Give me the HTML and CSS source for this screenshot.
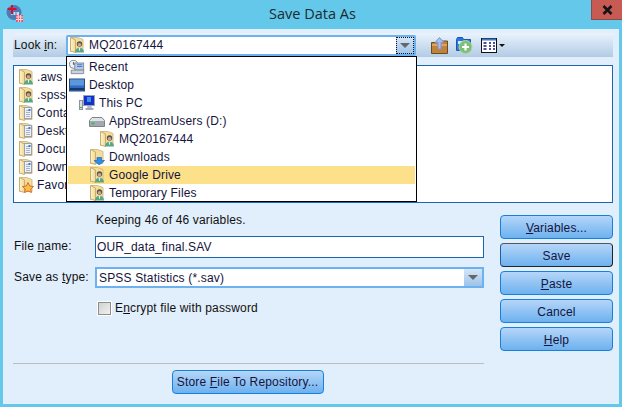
FILE: index.html
```html
<!DOCTYPE html>
<html lang="en">
<head>
<meta charset="utf-8">
<title>Save Data As</title>
<link rel="stylesheet" href="styles.css">
</head>
<body>
<svg class="defs" width="0" height="0" aria-hidden="true">
  <defs>
    <linearGradient id="fold" x1="0" y1="0" x2="1" y2="0"><stop offset="0" stop-color="#fdf3cf"/><stop offset="1" stop-color="#f0d892"/></linearGradient>
    <symbol id="folder" viewBox="0 0 16 16">
      <path d="M1.500 .5h7l5.500 2v12h-12.500z" fill="#f3dc9c" stroke="#d3bd84" stroke-width="1"/>
      <path d="M1.500 .5l5 2.500v12.500l-5-1.500z" fill="url(#fold)" stroke="#c9ae6e" stroke-width="1"/>
    </symbol>
    <symbol id="f-user" viewBox="0 0 16 16">
      <use href="#folder"/>
      <circle cx="10.500" cy="7" r="2.700" fill="#5d5245"/>
      <circle cx="10.500" cy="7.700" r="1.800" fill="#c9a78c"/>
      <path d="M6 15.500c0-3 2-4.700 4.500-4.700s4.500 1.700 4.500 4.700z" fill="#5aa583"/>
      <path d="M9.700 10.800h1.600l-.4 3h-.8z" fill="#e4f2ea"/>
    </symbol>
    <symbol id="f-doc" viewBox="0 0 16 16">
      <use href="#folder"/>
      <rect x="6.500" y="2.500" width="7" height="11" fill="#eef1f6" stroke="#98a2b0"/>
      <path d="M8 5.500h4M8 7.500h4M8 9.500h4M8 11.500h4" stroke="#a9b3c2"/>
      <rect x="10.500" y="4" width="2" height="2" fill="#3a78d0"/>
    </symbol>
    <symbol id="f-star" viewBox="0 0 16 16">
      <use href="#folder"/>
      <path d="M10 5.500l1.700 3.500 3.800.5-2.800 2.600.7 3.400-3.400-1.600-3.400 1.600.7-3.400-2.800-2.600 3.800-.5z" fill="#f6c24a" stroke="#dc6a2c" stroke-width="1"/>
    </symbol>
    <symbol id="f-down" viewBox="0 0 16 16">
      <use href="#folder"/>
      <path d="M8 8.500h4.500v3H15.500l-5.250 4.500-5.250-4.500H8z" fill="#2b8fe6" stroke="#1b69c0" stroke-width=".7"/>
    </symbol>
  </defs>
</svg>
<div class="window">
  <header class="titlebar">
    <svg class="app-icon" width="18" height="18" viewBox="0 0 18 18" aria-hidden="true">
      <circle cx="9" cy="8.500" r="7.500" fill="#4f7bb5"/>
      <path d="M6 8h8v3H6z" fill="#c9d8ec"/>
      <path d="M8 8v3M11 8v3" stroke="#4f7bb5"/>
      <rect x="11" y="11" width="7" height="7" fill="#e8506a"/>
      <path d="M11 13h7M11 15.500h7M13.300 11v7M15.700 11v7" stroke="#fbd5dc"/>
      <path d="M7 1v9M2.500 5h9" stroke="#d8102e" stroke-width="2"/>
    </svg>
    <span class="title">Save Data As</span>
    <button class="close" type="button">
      <svg width="11" height="10" viewBox="0 0 11 10" aria-hidden="true"><path d="M1.500 1l8 8M9.500 1l-8 8" stroke="#141414" stroke-width="2.600"/></svg>
    </button>
  </header>
  <main class="client">
    <div class="toolbar">
      <span class="look-label">Look <u>i</u>n:</span>
      <div class="combo look-combo">
        <svg class="ic16" aria-hidden="true"><use href="#f-user"/></svg>
        <span class="combo-value">MQ20167444</span>
        <span class="combo-btn focused"><i class="caret"></i></span>
      </div>
      <div class="tools">
        <svg width="17" height="17" viewBox="0 0 17 17" aria-hidden="true">
          <path d="M.5 5.500h5l1-1.500h10v12.500h-16z" fill="#c08238" stroke="#6e4a24"/>
          <path d="M1 7h15v2H1z" fill="#dca45c"/>
          <path d="M8.500 .5l4.500 5h-3v6.500h-3V5.500H4z" fill="#a9bdf0" stroke="#7d94d6"/>
        </svg>
        <svg width="17" height="17" viewBox="0 0 17 17" aria-hidden="true">
          <path d="M.5 2.500l1-2h5l1 2h7v11h-14z" fill="#2a77e0" stroke="#1a58b8"/>
          <path d="M2 4h11v3H2z" fill="#dce9fb"/>
          <circle cx="9.500" cy="10" r="6.500" fill="#7fbe78" stroke="#a8d8a2"/>
          <path d="M9.500 6.500v7M6 10h7" stroke="#fff" stroke-width="2.200"/>
        </svg>
        <span class="view-tool">
          <svg width="16" height="15" viewBox="0 0 16 15" aria-hidden="true">
            <rect x=".5" y=".5" width="15" height="14" fill="#fff" stroke="#111"/>
            <path d="M1 1.500h14" stroke="#3a78c8" stroke-width="2"/>
            <path d="M2.500 5h3M8 5h2M12 5h2M2.500 8h3M8 8h2M12 8h2M2.500 11h3M8 11h2M12 11h2" stroke="#16167e" stroke-width="1.500"/>
          </svg>
          <i class="mini-caret"></i>
        </span>
      </div>
    </div>

    <ul class="file-list">
      <li><svg class="ic16" aria-hidden="true"><use href="#f-user"/></svg>.aws</li>
      <li><svg class="ic16" aria-hidden="true"><use href="#f-user"/></svg>.spss</li>
      <li><svg class="ic16" aria-hidden="true"><use href="#f-doc"/></svg>Contacts</li>
      <li><svg class="ic16" aria-hidden="true"><use href="#f-doc"/></svg>Desktop</li>
      <li><svg class="ic16" aria-hidden="true"><use href="#f-doc"/></svg>Documents</li>
      <li><svg class="ic16" aria-hidden="true"><use href="#f-doc"/></svg>Downloads</li>
      <li><svg class="ic16" aria-hidden="true"><use href="#f-star"/></svg>Favorites</li>
    </ul>

    <div class="lower">
      <div class="form">
        <p class="note">Keeping 46 of 46 variables.</p>
        <div class="field">
          <label class="field-label">File <u>n</u>ame:</label>
          <div class="text-input">OUR_data_final.SAV</div>
        </div>
        <div class="field type-field">
          <label class="field-label">Save as <u>t</u>ype:</label>
          <div class="combo type-combo">
            <span class="combo-value">SPSS Statistics (*.sav)</span>
            <span class="combo-btn"><i class="caret"></i></span>
          </div>
        </div>
        <label class="check"><i class="box"></i><span>E<u>n</u>crypt file with password</span></label>
        <hr class="rule">
        <div class="store-row">
          <button class="btn store" type="button">Store <u>F</u>ile To Repository...</button>
        </div>
      </div>
      <div class="actions">
        <button class="btn" type="button"><u>V</u>ariables...</button>
        <button class="btn default" type="button">Save</button>
        <button class="btn" type="button"><u>P</u>aste</button>
        <button class="btn" type="button">Cancel</button>
        <button class="btn" type="button"><u>H</u>elp</button>
      </div>
    </div>
  </main>

  <ul class="popup">
    <li>
      <svg class="ic16" viewBox="0 0 18 16" aria-hidden="true">
        <circle cx="5" cy="5" r="4.500" fill="#eef1f5" stroke="#76808c"/>
        <path d="M5 2.500V5h2" stroke="#444" fill="none"/>
        <rect x="6.500" y="3.500" width="10" height="8" fill="#b9cbe6" stroke="#77889e"/>
        <path d="M2.500 11.500h14v4h-14z" fill="#cdd3db" stroke="#7d8794"/>
        <path d="M9 5.500h6M9 7.500h6" stroke="#3f70c0"/>
      </svg>Recent
    </li>
    <li>
      <svg class="ic16" viewBox="0 0 16 13" aria-hidden="true">
        <rect x=".5" y=".5" width="15" height="12" fill="#2c6cc4" stroke="#2a4a78"/>
        <path d="M1 1h14v6H1z" fill="#5c96dc"/>
        <path d="M1 10.500h14" stroke="#16386c" stroke-width="2"/>
      </svg>Desktop
    </li>
    <li class="lvl1">
      <svg class="ic16" viewBox="0 0 16 16" aria-hidden="true">
        <rect x=".5" y="5.500" width="3" height="9" fill="#d8dce2" stroke="#8a929c"/>
        <path d="M1 12.500h2" stroke="#4ea84e"/>
        <rect x="4.500" y=".5" width="11" height="10" fill="#1530c8" stroke="#9aa4b2"/>
        <path d="M8 2h4v5H8z" fill="#3f90ea"/>
        <path d="M8.500 11h4l.5 2.500H8z" fill="#b4bcc6"/>
        <path d="M6.500 14h8" stroke="#8a929c" stroke-width="1.500"/>
      </svg>This PC
    </li>
    <li class="lvl2">
      <svg class="ic16" viewBox="0 0 16 16" aria-hidden="true">
        <path d="M.5 7.500l2.500-3h10l2.500 3v6h-15z" fill="#dfe2e6" stroke="#7b838d"/>
        <path d="M1 8h14v5H1z" fill="#a3a9b1"/>
        <path d="M2.500 10.500h3" stroke="#48b848" stroke-width="2"/>
      </svg>AppStreamUsers (D:)
    </li>
    <li class="lvl3"><svg class="ic16" aria-hidden="true"><use href="#f-user"/></svg>MQ20167444</li>
    <li class="lvl2"><svg class="ic16" aria-hidden="true"><use href="#f-down"/></svg>Downloads</li>
    <li class="lvl2 selected"><svg class="ic16" aria-hidden="true"><use href="#f-user"/></svg>Google Drive</li>
    <li class="lvl2"><svg class="ic16" aria-hidden="true"><use href="#f-user"/></svg>Temporary Files</li>
  </ul>
</div>
</body>
</html>
```
FILE: styles.css
```css
* { box-sizing: border-box; }
html, body { margin: 0; padding: 0; }
body {
  width: 622px;
  height: 407px;
  overflow: hidden;
  font-family: "Liberation Sans", Arial, sans-serif;
  font-size: 12px;
  letter-spacing: .16px;
  color: #111;
  background: #63c8e9;
}
.defs { position: absolute; }
u { text-underline-offset: 1px; }

.window {
  position: relative;
  width: 622px;
  height: 407px;
  display: flex;
  flex-direction: column;
  background: #63c8e9;
  padding: 0 3px 3px;
}
.titlebar {
  flex: none;
  height: 29px;
  display: flex;
  align-items: flex-start;
  position: relative;
}
.app-icon { position: absolute; left: 2px; top: 4px; }
.title {
  width: 100%;
  text-align: center;
  font-family: "Open Sans", "Noto Sans", sans-serif;
  font-size: 14.5px;
  line-height: 20px;
  margin-top: 4px;
  padding-left: 3px;
  letter-spacing: 0;
  color: #1a2a33;
}
.close {
  position: absolute;
  right: -3px;
  top: 0;
  width: 31px;
  height: 20px;
  border: 0;
  border-left: 1px solid #8e4a46;
  border-bottom: 1px solid #8e4a46;
  background: #c75b53;
  padding: 0;
  display: flex;
  align-items: center;
  justify-content: center;
}

.client {
  flex: 1;
  background: #e1eefb;
  padding: 4px 6px 0 10px;
  min-height: 0;
}

.toolbar {
  height: 24px;
  display: flex;
  align-items: center;
  background: linear-gradient(#eaf3fc, #b2cbe5);
}
.look-label { width: 53px; padding-left: 1px; }
.combo {
  display: flex;
  align-items: center;
  background: #fff;
  border: 2px solid #6cb2f0;
  border-radius: 2px;
}
.look-combo {
  width: 350px;
  height: 21px;
  padding-left: 1px;
}
.combo-value { flex: 1; padding-left: 4px; color: #14143c; }
.combo-btn {
  align-self: stretch;
  width: 18px;
  display: flex;
  align-items: center;
  justify-content: center;
  background: linear-gradient(#d5e6f7, #9cc3ea);
}
.combo-btn.focused { outline: 1px dotted #111; outline-offset: -1px; }
.caret {
  width: 0;
  height: 0;
  border-left: 5px solid transparent;
  border-right: 5px solid transparent;
  border-top: 5px solid #666;
}
.ic16 { width: 16px; height: 16px; flex: none; display: block; }
.tools {
  display: flex;
  align-items: center;
  margin-left: 15px;
  gap: 8px;
}
.view-tool { display: flex; align-items: center; gap: 2px; }
.mini-caret {
  width: 0;
  height: 0;
  border-left: 3px solid transparent;
  border-right: 3px solid transparent;
  border-top: 3px solid #111;
}

.file-list {
  list-style: none;
  margin: 8px 0 0;
  padding: 2px 0 0 4px;
  height: 138px;
  background: #fff;
  border: 1px solid #1a66b0;
}
.file-list li {
  height: 18px;
  display: flex;
  align-items: center;
  gap: 3px;
  color: #14143c;
}

.lower {
  display: flex;
  gap: 16px;
}
.form { width: 471px; }
.note { margin: 10px 0 0 83px; line-height: 15px; }
.field {
  display: flex;
  align-items: center;
  margin-top: 8px;
}
.field-label { width: 82px; padding-left: 1px; position: relative; top: -1px; }
.text-input {
  flex: 1;
  height: 22px;
  line-height: 20px;
  background: #fff;
  border: 1px solid #1a66b0;
  padding-left: 1px;
  color: #14143c;
}
.type-field { margin-top: 9px; }
.type-combo { flex: 1; height: 21px; border-radius: 0; }
.type-combo .combo-value { padding-left: 2px; }
.check {
  display: flex;
  align-items: center;
  gap: 4px;
  margin: 13px 0 0 85px;
  height: 14px;
}
.box {
  width: 13px;
  height: 13px;
  background: linear-gradient(135deg, #d2d2d2, #f0f0f0);
  border: 1px solid #8e8e8e;
  box-shadow: 0 0 0 1px #fff;
}
.rule {
  height: 1px;
  border: 0;
  background: #bdbdbd;
  margin: 48px 0 0;
}
.store-row {
  display: flex;
  justify-content: center;
  margin-top: 6px;
}

.btn {
  width: 113px;
  height: 24px;
  padding: 0;
  border: 1px solid #1680dc;
  border-radius: 4px;
  background: linear-gradient(#b5d6f8, #6db1ef);
  font: inherit;
  letter-spacing: inherit;
  color: #14143c;
}
.store { width: 152px; margin-right: 2px; }
.default { border-color: #555; border-left-color: #1a5fa8; border-right-color: #222; border-bottom-color: #222; }
.actions {
  margin-top: 12px;
  display: flex;
  flex-direction: column;
  gap: 4px;
}
.actions .btn { padding-top: 1px; }

.popup {
  position: absolute;
  left: 66px;
  top: 56px;
  width: 351px;
  height: 146px;
  margin: 0;
  padding: 1px;
  list-style: none;
  background: #fff;
  border: 1px solid #000;
}
.popup li {
  height: 18px;
  display: flex;
  align-items: center;
  gap: 4px;
  padding-left: 1px;
  color: #14143c;
}
.popup .lvl1 { padding-left: 11px; }
.popup .lvl2 { padding-left: 21px; }
.popup .lvl3 { padding-left: 31px; }
.popup .selected { background: #fde18a; }
```
